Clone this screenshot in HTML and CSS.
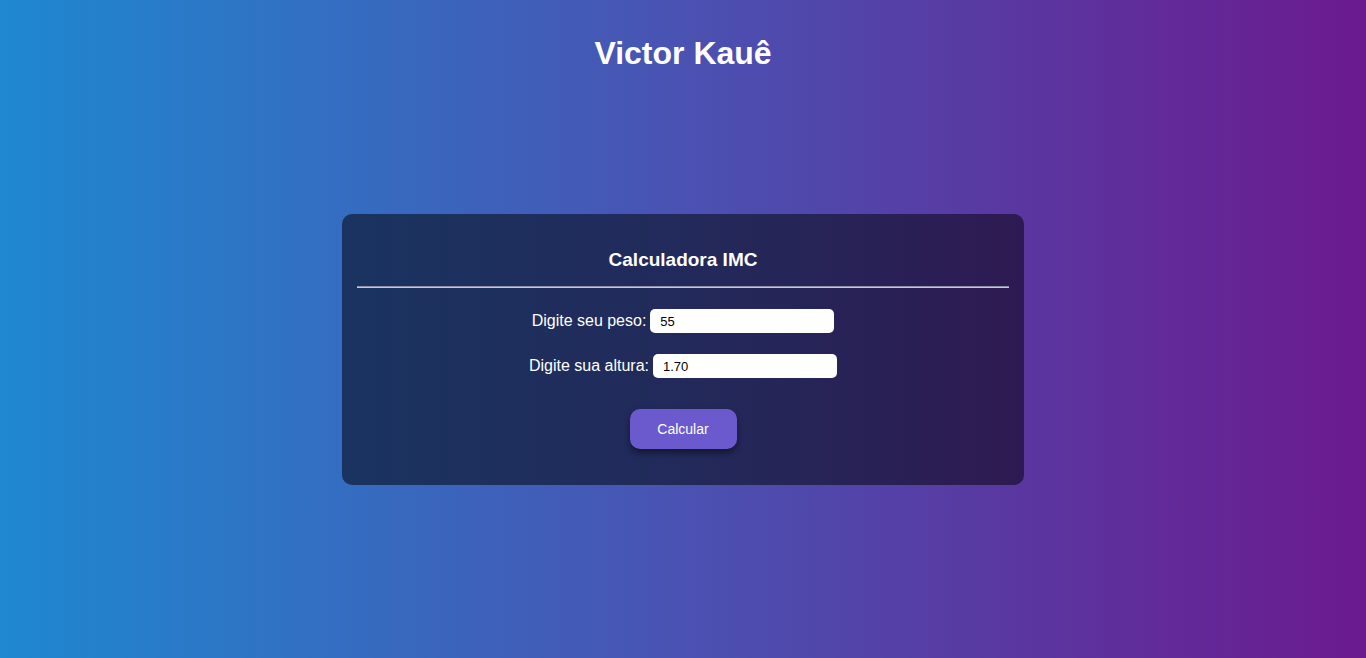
FILE: index.html
```html
<!DOCTYPE html>
<html lang="pt-BR">
<head>
<meta charset="UTF-8">
<title>Calculadora IMC</title>
<link rel="stylesheet" href="styles.css">
</head>
<body>
<header class="topo">
  <h1 class="nome">Victor Kauê</h1>
</header>
<main class="conteudo">
  <section class="card">
    <h2 class="card-titulo">Calculadora IMC</h2>
    <hr class="divisor">
    <div class="campo">
      <label for="peso">Digite seu peso:</label>
      <input id="peso" type="text" value="55">
    </div>
    <div class="campo">
      <label for="altura">Digite sua altura:</label>
      <input id="altura" type="text" value="1.70">
    </div>
    <button class="botao" type="button">Calcular</button>
  </section>
</main>
</body>
</html>
```
FILE: styles.css
```css
* { box-sizing: border-box; }
html, body { height: 100%; }
body {
  margin: 0;
  font-family: "Liberation Sans", Arial, sans-serif;
  color: #fff;
  background: linear-gradient(to right, #1e88d0 0%, #4a52b2 50%, #6b1a8e 100%);
  min-height: 658px;
}
.topo {
  display: flex;
  justify-content: center;
  padding-top: 35px;
}
.nome {
  margin: 0;
  font-size: 32px;
  line-height: 37px;
  font-weight: bold;
}
.conteudo {
  display: flex;
  justify-content: center;
  padding-top: 142px;
}
.card {
  width: 682px;
  border-radius: 10px;
  background: linear-gradient(to right, #1a3360 0%, #222a5a 50%, #2e1a52 100%);
  padding: 35px 15px 36px;
  display: flex;
  flex-direction: column;
  align-items: center;
}
.card-titulo {
  margin: 0;
  font-size: 19px;
  line-height: 22px;
  font-weight: bold;
}
.divisor {
  width: 100%;
  margin: 15px 0 0;
  border: none;
  height: 2px;
  background: linear-gradient(to bottom, #8f8fa8 0 1px, #c8c8d0 1px 2px);
}
.campo {
  display: flex;
  align-items: center;
  gap: 4px;
  font-size: 16px;
  height: 24px;
  margin-top: 21px;
}
.campo input {
  width: 184px;
  height: 24px;
  border: none;
  border-radius: 5px;
  padding: 0 10px;
  font-family: "Liberation Sans", Arial, sans-serif;
  font-size: 13px;
  color: #000;
  background: #fff;
}
.botao {
  margin-top: 31px;
  width: 107px;
  height: 40px;
  border: none;
  border-radius: 10px;
  background: #6a5acd;
  color: #fff;
  font-family: "Liberation Sans", Arial, sans-serif;
  font-size: 14px;
  box-shadow: 0 4px 6px rgba(0, 0, 0, 0.45);
}
```
